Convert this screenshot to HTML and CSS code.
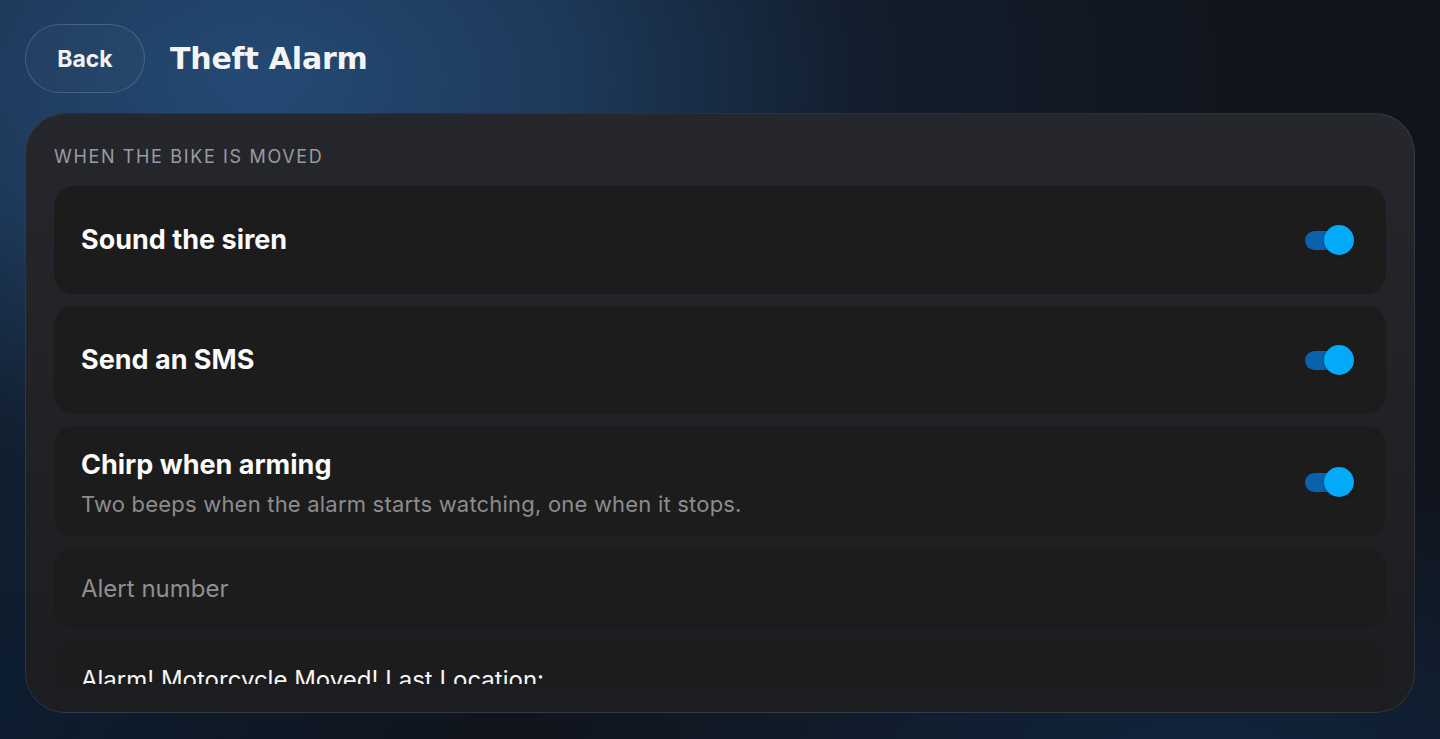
FILE: index.html
```html
<!DOCTYPE html>
<html lang="en">
<head>
<meta charset="utf-8">
<title>Theft Alarm</title>
<link rel="stylesheet" href="styles.css">
</head>
<body>
<div class="page">
  <header class="topbar">
    <button class="back">Back</button>
    <h1 class="title">Theft Alarm</h1>
  </header>
  <section class="card">
    <div class="section-label">When the bike is moved</div>
    <div class="list">
      <div class="row">
        <div class="row-text"><div class="row-title">Sound the siren</div></div>
        <div class="toggle"><span class="track"></span><span class="knob"></span></div>
      </div>
      <div class="row">
        <div class="row-text"><div class="row-title">Send an SMS</div></div>
        <div class="toggle"><span class="track"></span><span class="knob"></span></div>
      </div>
      <div class="row row-desc-row">
        <div class="row-text">
          <div class="row-title">Chirp when arming</div>
          <div class="row-desc">Two beeps when the alarm starts watching, one when it stops.</div>
        </div>
        <div class="toggle"><span class="track"></span><span class="knob"></span></div>
      </div>
      <div class="field">
        <span class="placeholder">Alert number</span>
      </div>
      <div class="field field-text">
        <span class="value">Alarm! Motorcycle Moved! Last Location:</span>
      </div>
    </div>
  </section>
</div>
</body>
</html>
```

FILE: styles.css
```css
* { box-sizing: border-box; }
html, body { margin: 0; height: 100%; }
body {
  font-family: Inter, "Noto Sans", sans-serif;
  color: #fff;
  background-color: #10141c;
  background-image:
    radial-gradient(ellipse 1000px 650px at 260px 80px, rgba(36,74,116,1) 0%, rgba(31,62,98,0.9) 30%, rgba(20,38,60,0.55) 60%, rgba(16,20,28,0) 100%),
    radial-gradient(ellipse 700px 300px at 1200px 760px, rgba(16,38,64,0.9) 0%, rgba(16,20,28,0) 100%),
    radial-gradient(ellipse 500px 400px at 0px 700px, rgba(12,30,50,0.9) 0%, rgba(16,20,28,0) 100%);
  overflow: hidden;
}
.page {
  height: 739px;
  padding: 24px 25px 26px 25px;
  display: flex;
  flex-direction: column;
  gap: 20px;
}
.topbar {
  display: flex;
  align-items: center;
  gap: 25px;
  height: 69px;
  flex: none;
}
.back {
  width: 120px;
  height: 69px;
  border-radius: 35px;
  border: 1px solid rgba(255,255,255,0.16);
  background: rgba(255,255,255,0.02);
  color: #f2f2f2;
  font-family: Inter, sans-serif;
  font-weight: 700;
  font-size: 23px;
  padding: 0;
}
.title {
  margin: 0;
  font-family: "DejaVu Sans", sans-serif;
  font-weight: 700;
  font-size: 30px;
  letter-spacing: -0.2px;
  color: #f4f4f4;
}
.card {
  flex: 1;
  min-height: 0;
  border-radius: 40px;
  border: 1px solid rgba(255,255,255,0.09);
  background: linear-gradient(180deg, #26272c 0%, #212226 50%, #1c1d20 100%);
  padding: 32px 28px 28px 28px;
  display: flex;
  flex-direction: column;
}
.section-label {
  font-size: 18px;
  line-height: 22px;
  text-transform: uppercase;
  letter-spacing: 1.65px;
  color: #9a9ba0;
  margin-bottom: 18px;
}
.list {
  flex: 1;
  min-height: 0;
  overflow: hidden;
  display: flex;
  flex-direction: column;
  gap: 12px;
}
.row {
  flex: none;
  min-height: 108px;
  border-radius: 20px;
  background: #1c1c1c;
  padding: 18px 32px 18px 27px;
  display: flex;
  align-items: center;
  justify-content: space-between;
}
.row-desc-row {
  padding-top: 22px;
  padding-bottom: 17px;
}
.row-title {
  font-size: 27px;
  font-weight: 700;
  line-height: 34px;
  color: #fafafa;
}
.row-desc {
  margin-top: 7px;
  font-size: 22px;
  line-height: 30px;
  letter-spacing: 0.2px;
  color: #8c8c8e;
}
.toggle {
  position: relative;
  width: 49px;
  height: 30px;
  flex: none;
  margin-top: -4px;
}
.row:not(.row-desc-row) .toggle { margin-top: 0; }
.track {
  position: absolute;
  left: 0;
  top: 6px;
  width: 42px;
  height: 19px;
  border-radius: 10px;
  background: #0a62ad;
}
.knob {
  position: absolute;
  right: 0;
  top: 0;
  width: 30px;
  height: 30px;
  border-radius: 50%;
  background: #02aaf7;
  box-shadow: 0 1px 3px rgba(0,0,0,0.35);
}
.field {
  flex: none;
  height: 81px;
  border-radius: 20px;
  background: #1c1c1c;
  padding: 0 27px;
  display: flex;
  align-items: center;
  font-size: 24px;
}
.placeholder { color: #8f8f91; }
.field-text {
  align-items: flex-start;
  padding-top: 24px;
  height: 120px;
}
.value { color: #f5f5f5; }
```
